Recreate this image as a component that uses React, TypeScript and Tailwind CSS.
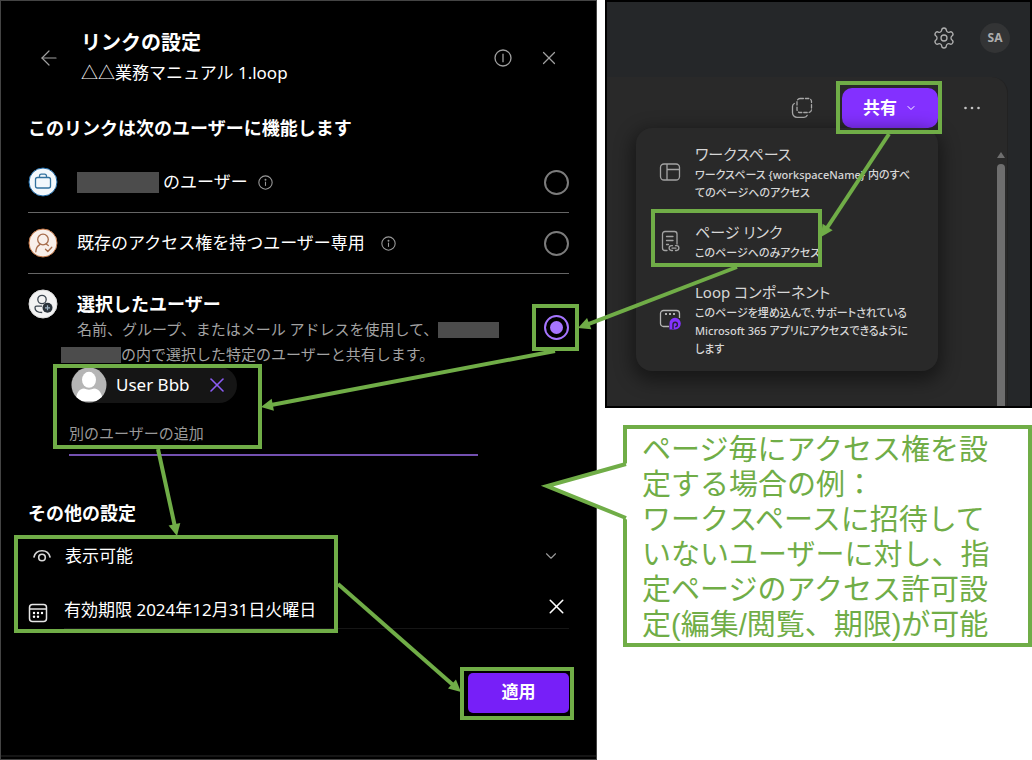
import type { ReactNode } from "react";
import { ArrowLeft, ChevronDown, Settings, X } from "lucide-react";

function InfoIcon({ className, dot = true }: { className: string; dot?: boolean }) {
  return (
    <svg viewBox="0 0 18 18" fill="none" stroke="currentColor" strokeWidth="1.3" className={className} aria-hidden="true">
      <circle cx="9" cy="9" r="8" />
      {dot ? (
        <>
          <path d="M9 8v5" />
          <circle cx="9" cy="5.6" r="0.5" fill="currentColor" />
        </>
      ) : (
        <path d="M9 4.8v8.4" />
      )}
    </svg>
  );
}

function BriefcaseBadge() {
  return (
    <svg viewBox="0 0 30 30" fill="none" className="size-[30px] shrink-0" aria-hidden="true">
      <circle cx="15" cy="15" r="14" fill="#f3f8fc" stroke="#1c68a6" strokeWidth="1" />
      <g stroke="#33729f" strokeWidth="1.3">
        <rect x="7.5" y="10.5" width="15" height="10.5" rx="2" />
        <path d="M11.5 10.5V9a1.8 1.8 0 0 1 1.8-1.8h3.4A1.8 1.8 0 0 1 18.5 9v1.5" />
      </g>
    </svg>
  );
}

function PersonCheckBadge() {
  return (
    <svg viewBox="0 0 30 30" fill="none" className="size-[30px] shrink-0" aria-hidden="true">
      <circle cx="15" cy="15" r="14" fill="#f8efea" stroke="#c47746" strokeWidth="1" />
      <g stroke="#a66b4a" strokeWidth="1.3" strokeLinecap="round" strokeLinejoin="round">
        <circle cx="15" cy="11.5" r="5.3" />
        <path d="M7.8 23.8c.2-3.5 1.5-5.8 4-7.2M18.5 16.2l1.8 1.3" />
        <path d="M17.5 21.3l2.3 2.2 4-4.3" />
      </g>
    </svg>
  );
}

function PersonAddBadge() {
  return (
    <svg viewBox="0 0 30 30" fill="none" className="size-[30px] shrink-0" aria-hidden="true">
      <circle cx="15" cy="15" r="14" fill="#f3f3f3" stroke="#dcdcdc" strokeWidth="1" />
      <g stroke="#3c4650" strokeWidth="1.3">
        <circle cx="14" cy="10.5" r="4.2" />
        <path d="M14 17.2H8.5A1.5 1.5 0 0 0 7 18.7c0 3 2.8 4.8 7.2 4.8" />
      </g>
      <circle cx="19.5" cy="18.8" r="5" fill="#2b333b" />
      <path d="M19.5 16.3v5M17 18.8h5" stroke="#9fb4c4" strokeWidth="1.2" />
    </svg>
  );
}

function Avatar() {
  return (
    <svg viewBox="0 0 36 36" className="size-[36px] shrink-0" aria-hidden="true">
      <defs>
        <clipPath id="avatar-clip">
          <circle cx="18" cy="18" r="17.5" />
        </clipPath>
      </defs>
      <circle cx="18" cy="18" r="17.5" fill="#b5b5b5" />
      <g clipPath="url(#avatar-clip)" fill="#fff">
        <ellipse cx="18" cy="12.8" rx="7" ry="8" />
        <path d="M5 34c0-8 3-12 8-12.5 3 1.5 7 1.5 10 0 5 .5 8.5 4.5 8.5 12.5z" />
      </g>
    </svg>
  );
}

function EyeIcon() {
  return (
    <svg viewBox="0 0 20 20" fill="none" stroke="#d8d8d8" strokeWidth="1.6" strokeLinecap="round" className="size-5" aria-hidden="true">
      <path d="M2 11c.8-3.7 4-6.3 8-6.3s7.2 2.6 8 6.3" />
      <circle cx="10" cy="11.5" r="3.3" />
    </svg>
  );
}

function CalendarIcon() {
  return (
    <svg viewBox="0 0 20 20" fill="none" stroke="#e6e6e6" strokeWidth="1.5" className="size-5" aria-hidden="true">
      <rect x="1.5" y="1.5" width="17" height="17" rx="3" />
      <path d="M1.5 6h17" />
      <g fill="#fff" stroke="none">
        <circle cx="6" cy="10" r="1.2" />
        <circle cx="10" cy="10" r="1.2" />
        <circle cx="14" cy="10" r="1.2" />
        <circle cx="6" cy="13.8" r="1.2" />
        <circle cx="10" cy="13.8" r="1.2" />
      </g>
    </svg>
  );
}

function CopyIcon() {
  return (
    <svg viewBox="0 0 22 22" fill="none" stroke="#a8a8a8" strokeWidth="1.3" strokeLinecap="round" className="size-[22px]" aria-hidden="true">
      <rect x="6" y="1.5" width="14.5" height="14" rx="3" strokeDasharray="3.4 2" />
      <path d="M3.3 6.5C2.200 7 1.500 8 1.500 9.500v6.300a4.500 4.500 0 0 0 4.500 4.500h7c1.500 0 2.700-.7 3.200-2" />
    </svg>
  );
}

function WorkspaceIcon() {
  return (
    <svg viewBox="0 0 22 22" fill="none" stroke="#a3a3a3" strokeWidth="1.3" className="size-[22px]" aria-hidden="true">
      <rect x="1.5" y="3" width="19" height="16" rx="3.5" />
      <path d="M8 3v16M8 8.5h12.5" />
    </svg>
  );
}

function PageLinkIcon() {
  return (
    <svg viewBox="0 0 22 22" fill="none" stroke="#a3a3a3" strokeWidth="1.3" strokeLinecap="round" className="size-[22px]" aria-hidden="true">
      <path d="M8 20.5H6A2.5 2.5 0 0 1 3.5 18V4A2.5 2.5 0 0 1 6 1.5h9.500A2.500 2.500 0 0 1 18 4v10" />
      <path d="M7.5 6.5h6.5M7.5 10.5h6.5M7.5 14.5h2" />
      <path d="M13.5 15.7h-1a2.400 2.400 0 0 0 0 4.800h1M16.500 15.700h1a2.400 2.400 0 0 1 0 4.800h-1M13 18.100h4" />
    </svg>
  );
}

function ComponentIcon() {
  return (
    <svg viewBox="0 0 22 22" fill="none" className="size-[22px]" aria-hidden="true">
      <path d="M10 18.5H4.5a3 3 0 0 1-3-3v-10a3 3 0 0 1 3-3h13a3 3 0 0 1 3 3V10" stroke="#b5b5b5" strokeWidth="1.3" />
      <g fill="#dedede">
        <circle cx="7" cy="6" r="1" />
        <circle cx="11" cy="6" r="1" />
        <circle cx="15" cy="6" r="1" />
      </g>
      <path d="M16 9.800a5.800 5.800 0 1 1 0 11.600h-5.500v-5.800A5.600 5.600 0 0 1 16 9.800z" fill="#8433ff" />
      <path d="M14 21v-4.500a2.200 2.200 0 1 1 2.200 2.200" stroke="#28203a" strokeWidth="1.4" />
    </svg>
  );
}

function Redacted({ className }: { className: string }) {
  return <span className={`inline-block shrink-0 bg-[#4c4c4c] ${className}`} />;
}

function AudienceRadio({ id, checked = false }: { id: string; checked?: boolean }) {
  return (
    <input
      id={id}
      type="radio"
      name="audience"
      defaultChecked={checked}
      className="grid size-[25px] shrink-0 appearance-none place-items-center rounded-full border-2 border-[#7c7c7c] checked:border-[#a675ff] checked:before:size-[13px] checked:before:rounded-full checked:before:bg-[#a675ff] checked:before:content-['']"
    />
  );
}

function LinkSettings() {
  return (
    <section className="flex flex-col border border-[#444] bg-black text-white">
      <header className="flex px-9 pt-[27px]">
        <button aria-label="戻る" className="mr-5 flex h-[60px] items-center text-[#a0a0a0]">
          <ArrowLeft className="size-6" strokeWidth={1.2} />
        </button>
        <div className="flex-1 whitespace-nowrap">
          <h1 className="text-xl leading-[30px] font-bold">リンクの設定</h1>
          <p className="text-[17px] leading-[30px]">△△業務マニュアル 1.loop</p>
        </div>
        <div className="flex h-[60px] items-center gap-[26px] text-[#a0a0a0]">
          <button aria-label="情報">
            <InfoIcon className="size-[18px]" dot={false} />
          </button>
          <button aria-label="閉じる">
            <X className="size-[22px]" strokeWidth={1.3} />
          </button>
        </div>
      </header>

      <fieldset className="mt-6 px-[27px]">
        <legend className="text-[18px] leading-8 font-bold">このリンクは次のユーザーに機能します</legend>
        <div className="mt-2 flex h-[61px] items-center border-b border-[#666]">
          <BriefcaseBadge />
          <label htmlFor="org" className="ml-[19px] flex items-center text-[17px]">
            <Redacted className="mr-1 h-[21px] w-[82px]" />
            のユーザー
          </label>
          <InfoIcon className="ml-2.5 size-[15px] text-[#999]" />
          <span className="flex-1" />
          <AudienceRadio id="org" />
        </div>
        <div className="flex h-[61px] items-center border-b border-[#666]">
          <PersonCheckBadge />
          <label htmlFor="existing" className="ml-[19px] text-[17px]">
            既存のアクセス権を持つユーザー専用
          </label>
          <InfoIcon className="ml-4 size-[15px] text-[#999]" />
          <span className="flex-1" />
          <AudienceRadio id="existing" />
        </div>
        <div className="flex pt-[15px]">
          <PersonAddBadge />
          <div className="flex-1 whitespace-nowrap">
            <label htmlFor="selected" className="ml-[19px] block pt-0.5 text-[18px] leading-[26px] font-bold">
              選択したユーザー
            </label>
            <p className="ml-[3px] text-[15px] leading-[25px] text-[#a3a3a3]">
              <span className="flex items-center pl-4">
                名前、グループ、またはメール アドレスを使用して、
                <Redacted className="h-4 w-[61px]" />
              </span>
              <span className="flex items-center">
                <Redacted className="h-4 w-[60px]" />
                の内で選択した特定のユーザーと共有します。
              </span>
            </p>
          </div>
          <div className="pt-[26px]">
            <AudienceRadio id="selected" checked />
          </div>
        </div>
      </fieldset>

      <div className="mr-[118px] ml-[68px]">
        <div className="ml-0.5 flex h-9 w-[166px] items-center rounded-full bg-[#151515]">
          <Avatar />
          <span className="ml-[9px] flex-1 text-[17px]">User Bbb</span>
          <button aria-label="User Bbb を削除" className="mr-2 text-[#8c5cf5]">
            <X className="size-6" strokeWidth={1.6} />
          </button>
        </div>
        <input
          aria-label="別のユーザーの追加"
          placeholder="別のユーザーの追加"
          className="mt-[9px] block h-11 w-full border-b-2 border-[#7350b0] bg-transparent text-[15px] placeholder:text-[#999]"
        />
      </div>

      <h2 className="mt-[41px] px-[27px] text-[18px] leading-8 font-bold">その他の設定</h2>
      <div className="flex h-[54px] items-center pr-9 pl-[31px]">
        <EyeIcon />
        <span className="ml-[13px] flex-1 text-[17px]">表示可能</span>
        <button aria-label="権限を選択" className="text-[#999]">
          <ChevronDown className="size-[18px]" strokeWidth={1.5} />
        </button>
      </div>
      <div className="mt-1 flex px-[27px]">
        <span className="pt-4">
          <CalendarIcon />
        </span>
        <div className="ml-4 flex h-[42px] flex-1 justify-between border-b border-[#161616]">
          <span className="pt-[7px] text-[17px] leading-[32px] whitespace-nowrap">有効期限 2024年12月31日火曜日</span>
          <button aria-label="有効期限を削除" className="flex h-[38px] items-center">
            <X className="size-[25px]" strokeWidth={1.5} />
          </button>
        </div>
      </div>
      <div className="flex flex-1 flex-col items-end px-[27px] pt-11 pb-[41px]">
        <button className="h-10 w-[101px] rounded-[5px] bg-[#771ff8] pb-0.5 text-[17px] font-bold">適用</button>
      </div>
      <div className="mb-0.5 h-0.5 bg-[#151515]" />
    </section>
  );
}

function MenuItem({ icon, title, children }: { icon: ReactNode; title: string; children: ReactNode }) {
  return (
    <button role="menuitem" className="flex items-center text-left whitespace-nowrap text-[#d6d6d6]">
      <span className="mr-[14px]">{icon}</span>
      <span>
        <span className="block text-[15px] leading-6">{title}</span>
        <span className="block text-[11px] leading-[18px] font-medium">{children}</span>
      </span>
    </button>
  );
}

function LoopWindow() {
  return (
    <section className="flex h-[408px] flex-col border-2 border-black bg-[#252729] text-[#cfcfcf]">
      <div className="flex h-[75px] items-center justify-end gap-6 pr-5 pb-[3px]">
        <button aria-label="設定" className="text-[#b0b0b0]">
          <Settings className="size-6" strokeWidth={1.3} />
        </button>
        <button className="size-[30px] rounded-full bg-[#333435] text-[12px] font-bold text-[#adadad]">SA</button>
      </div>
      <div className="mr-[22px] flex flex-1 flex-col rounded-tr-2xl border-r border-[#222] bg-[#292929]">
        <div className="flex items-center justify-end pt-[11px] pr-[26px]">
          <button aria-label="コピー" className="mr-[29px]">
            <CopyIcon />
          </button>
          <div className="relative">
            <button className="flex h-10 w-24 items-center justify-center gap-2 rounded-[10px] bg-[#8330ff] text-[17px] font-bold text-white">
              共有
              <ChevronDown className="size-3" strokeWidth={2} />
            </button>
            <div
              role="menu"
              className="absolute top-full right-0 flex w-[302px] flex-col gap-[18px] rounded-2xl bg-[#292929] px-[23px] pt-[14px] pb-[13px] [font-feature-settings:'palt'] shadow-[0_6px_18px_4px_#00000070]"
            >
              <MenuItem icon={<WorkspaceIcon />} title="ワークスペース">
                ワークスペース {"{workspaceName}"} 内のすべ
                <br />
                てのページへのアクセス
              </MenuItem>
              <MenuItem icon={<PageLinkIcon />} title="ページ リンク">
                このページへのみアクセス
              </MenuItem>
              <MenuItem icon={<ComponentIcon />} title="Loop コンポーネント">
                このページを埋め込んで、サポートされている
                <br />
                Microsoft 365 アプリにアクセスできるように
                <br />
                します
              </MenuItem>
            </div>
          </div>
          <button aria-label="その他" className="ml-[25px]">
            <svg viewBox="0 0 18 18" fill="#c4c4c4" className="size-[18px]" aria-hidden="true">
              <circle cx="2.5" cy="9" r="1.3" />
              <circle cx="9" cy="9" r="1.3" />
              <circle cx="15.5" cy="9" r="1.3" />
            </svg>
          </button>
        </div>
        <div className="flex flex-1 flex-col items-center self-end pt-6 pr-0.5">
          <svg viewBox="0 0 8 6" className="mb-1.5 h-1.5 w-2" aria-hidden="true">
            <path d="M4 0l4 6H0z" fill="#6e6e6e" />
          </svg>
          <div className="w-2 flex-1 rounded-t bg-[#6e6e6e]" />
        </div>
      </div>
    </section>
  );
}

function Callout() {
  return (
    <aside className="relative mt-[17px] ml-[18px] border-4 border-[#70ad47] bg-white pt-1 pl-[15px] font-['Liberation_Sans','Noto_Sans_CJK_JP',sans-serif] text-[29px] leading-[35px] whitespace-nowrap text-[#70ad47]">
      <svg viewBox="0 0 88 64" className="absolute top-[31px] -left-[87px] z-10 h-16 w-[88px]" aria-hidden="true">
        <path d="M88 3L7 26l81 34z" fill="#fff" />
        <path d="M86 4L7 26l79 32" fill="none" stroke="#70ad47" strokeWidth="4" strokeMiterlimit="10" />
      </svg>
      ページ毎にアクセス権を設
      <br />
      定する場合の例：
      <br />
      ワークスペースに招待して
      <br />
      いないユーザーに対し、指
      <br />
      定ページのアクセス許可設
      <br />
      定(編集/閲覧、期限)が可能
    </aside>
  );
}

/* Highlight frames and the arrows that lead from one step to the next. */
function Annotations() {
  const frames = [
    [838, 83, 102, 49],
    [653, 211, 167, 54],
    [534, 306, 43, 43],
    [55, 366, 205, 81],
    [16, 537, 320, 94],
    [462, 669, 110, 49],
  ];
  const arrows = [
    [889, 134, 821, 237],
    [737, 267, 578, 328],
    [555, 351, 261, 407],
    [158, 449, 177, 536],
    [338, 584, 461, 692],
  ];
  return (
    <svg viewBox="0 0 1032 760" preserveAspectRatio="none" fill="none" stroke="#70ad47" strokeWidth="4" className="pointer-events-none absolute inset-0 z-20 h-full w-full" aria-hidden="true">
      {frames.map(([x, y, w, h]) => (
        <rect key={x} x={x} y={y} width={w} height={h} />
      ))}
      {arrows.map(([x1, y1, x2, y2]) => {
        const length = Math.hypot(x2 - x1, y2 - y1);
        const angle = (Math.atan2(y2 - y1, x2 - x1) * 180) / Math.PI;
        return (
          <g key={x1} transform={`translate(${x1} ${y1}) rotate(${angle})`}>
            <path d={`M0 0H${length - 9}`} />
            <path d={`M${length} 0l-12 -6v12z`} fill="#70ad47" stroke="none" />
          </g>
        );
      })}
    </svg>
  );
}

export default function App() {
  return (
    <main className="relative grid min-h-screen grid-cols-[597fr_427fr] gap-2 bg-white font-['Noto_Sans','Noto_Sans_CJK_JP',sans-serif]">
      <LinkSettings />
      <div>
        <LoopWindow />
        <Callout />
      </div>
      <Annotations />
    </main>
  );
}
